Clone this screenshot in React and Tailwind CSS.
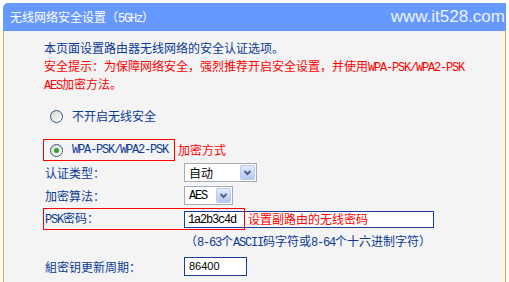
import React from 'react';

// half-width ASCII, like the SimSun latin glyphs in the router page
function M({ children }) {
  return <span className="font-['Liberation_Mono',monospace] text-[12px] tracking-[-1.2px]">{children}</span>;
}

function Radio({ checked }) {
  return (
    <span className="w-[13px] h-[13px] rounded-full border border-[#35577a] bg-linear-to-br from-[#d6d6d0] to-white flex items-center justify-center shrink-0">
      {checked && <span className="w-[5px] h-[5px] rounded-full bg-[#2aa52a]" />}
    </span>
  );
}

function Select({ width, children }) {
  return (
    <div className={`${width} h-[19px] border border-[#a5acb2] bg-white flex items-stretch`}>
      <div className="flex-1 pl-[4px] flex items-center text-black">{children}</div>
      <div className="w-[15px] m-[1px] rounded-[2px] bg-linear-to-b from-[#e3ebfd] to-[#b5c9f3] border border-[#b9cbf0] flex items-center justify-center">
        <svg width="9" height="7" viewBox="0 0 9 7">
          <path d="M1.5 2 L4.5 5 L7.5 2" fill="none" stroke="#4d6185" strokeWidth="2" />
        </svg>
      </div>
    </div>
  );
}

export default function App() {
  const blue = 'text-[#0b3a96]';
  return (
    <div className="w-[509px] h-[282px] bg-white pt-[3px] pl-[3px] overflow-hidden font-['Noto_Sans_CJK_SC',sans-serif] text-[12px]">
      <div className="w-[503px] h-[279px] flex flex-col">
        {/* header bar */}
        <div className="h-[28px] bg-[#6699ff] rounded-tl-[5px] flex items-center justify-between pl-[7px] pr-[1px]">
          <span className="text-white leading-none pt-[2px]">无线网络安全设置（<M>5GHz</M>）</span>
          <span className="text-[#eef2fd] font-['Liberation_Sans',sans-serif] text-[17px] leading-none -mt-[2px]">www.it528.com</span>
        </div>

        {/* body */}
        <div className="flex-1 bg-[#f4f4f4] border-x border-[#f6a144] pl-[40px] pt-[8px]">
          <div className={`h-[18px] leading-[18px] ${blue}`}>本页面设置路由器无线网络的安全认证选项。</div>
          <div className="h-[18px] leading-[18px] text-[#ff0000]">
            安全提示：为保障网络安全，强烈推荐开启安全设置，并使用<M>WPA-PSK/WPA2-PSK</M>
          </div>
          <div className="h-[18px] leading-[18px] text-[#ff0000]">
            <M>AES</M>加密方法。
          </div>

          <div className={`mt-[13px] h-[20px] flex items-center pl-[6px] gap-[9px] ${blue}`}>
            <Radio />
            <span>不开启无线安全</span>
          </div>

          <div className="mt-[13px] h-[22px] flex items-center -ml-[1px]">
            <div className={`w-[132px] h-[22px] border border-[#ff0000] flex items-center pl-[6px] gap-[9px] ${blue}`}>
              <Radio checked />
              <M>WPA-PSK/WPA2-PSK</M>
            </div>
            <span className="ml-[3px] text-[#ff0000]">加密方式</span>
          </div>

          <div className={`mt-[2px] h-[19px] flex items-center ${blue}`}>
            <span className="w-[140px] pl-[1px]">认证类型：</span>
            <Select width="w-[73px]">自动</Select>
          </div>

          <div className={`mt-[4px] h-[19px] flex items-center ${blue}`}>
            <span className="w-[140px] pl-[1px]">加密算法：</span>
            <Select width="w-[49px]"><M>AES</M></Select>
          </div>

          <div className={`relative mt-[3px] h-[22px] flex items-center ${blue}`}>
            <span className="w-[140px] pl-[1px]"><M>PSK</M>密码：</span>
            <div className="w-[250px] h-[17px] border border-[#1a3d9c] bg-white flex items-center pl-[3px]">
              <span className="text-black"><M>1a2b3c4d</M></span>
              <span className="ml-[12px] text-[#ff0000]">设置副路由的无线密码</span>
            </div>
            <div className="absolute -left-[1px] top-0 w-[202px] h-[22px] border border-[#ff0000] pointer-events-none" />
          </div>

          <div className={`mt-[2px] h-[18px] leading-[18px] pl-[141px] ${blue}`}>
            （<M>8-63</M>个<M>ASCII</M>码字符或<M>8-64</M>个十六进制字符）
          </div>

          <div className={`mt-[7px] h-[19px] flex items-center ${blue}`}>
            <span className="w-[140px] pl-[1px]">組密钥更新周期：</span>
            <div className="w-[63px] h-[19px] border border-[#1a3d9c] bg-white flex items-center pl-[4px] text-black font-['Liberation_Sans',sans-serif] text-[11px]">
              86400
            </div>
          </div>
        </div>
      </div>
    </div>
  );
}
